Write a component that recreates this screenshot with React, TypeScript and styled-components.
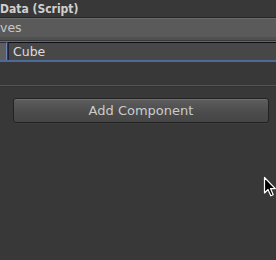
import React from "react";
import styled, { createGlobalStyle } from "styled-components";

const Global = createGlobalStyle`
  html, body { margin: 0; padding: 0; background: #383838; }
  body { font-family: "DejaVu Sans", "Liberation Sans", sans-serif; overflow: hidden; }
`;

const Panel = styled.div`
  position: relative;
  width: 276px;
  height: 260px;
  background: #383838;
  display: flex;
  flex-direction: column;
  overflow: hidden;
`;

const Title = styled.div`
  height: 17px;
  line-height: 18px;
  font-family: "DejaVu Sans Condensed", "DejaVu Sans", sans-serif;
  font-size: 12px;
  font-weight: bold;
  color: #d0d0d0;
  white-space: nowrap;
`;

const Band = styled.div`
  height: 20px;
  border-top: 1px solid #262626;
  box-shadow: inset 0 1px 0 #696969, inset 0 -3px 0 #505050;
  background: #5a5a5a;
  color: #c8c8c8;
  font-size: 12.5px;
  line-height: 20px;
  white-space: nowrap;
  padding-bottom: 2px;
`;

const FieldRow = styled.div`
  margin-top: 1px;
  height: 18px;
  display: flex;
  border-top: 1px solid #4f6b9c;
  border-bottom: 2px solid #4e6a98;
`;

const Stub = styled.div`
  width: 6px;
  background: #5e5e5e;
  border-right: 1px solid #6d86b3;
  border-top: 1px solid #2a2a3a;
`;

const Field = styled.div`
  flex: 1;
  margin-left: 1px;
  background: #474747;
  border-top: 1px solid #0d0d18;
  border-left: 1px solid #20202e;
  color: #dcdcdc;
  font-size: 12.5px;
  line-height: 17px;
  padding-left: 4px;
`;

const Separator = styled.div`
  margin-top: 23px;
  height: 1px;
  background: #545454;
  border-bottom: 1px solid #333;
`;

const ButtonWrap = styled.div`
  margin-top: 11px;
  padding-left: 13px;
`;

const AddButton = styled.div`
  box-sizing: border-box;
  width: 256px;
  height: 25px;
  border-radius: 3px;
  border: 1px solid #222222;
  background: linear-gradient(#5d5d5d, #4b4b4b 60%, #464646);
  box-shadow: inset 0 1px 0 #6e6e6e, 0 1px 0 #3e3e3e;
  color: #cbcbcb;
  font-size: 13px;
  line-height: 23px;
  text-align: center;
`;

const Cursor = styled.svg`
  position: absolute;
  left: 263px;
  top: 176px;
`;

export default function App() {
  return (
    <>
      <Global />
      <Panel>
        <Title>Data (Script)</Title>
        <Band>ves</Band>
        <FieldRow>
          <Stub />
          <Field>Cube</Field>
        </FieldRow>
        <Separator />
        <ButtonWrap>
          <AddButton>Add Component</AddButton>
        </ButtonWrap>
        <Cursor width="14" height="22" viewBox="0 0 14 22">
          <path
            d="M1.5 1.5 L1.5 17 L5 13.5 L7.8 19.8 L10.2 18.8 L7.5 12.6 L12.3 12.6 Z"
            fill="#000"
            stroke="#fff"
            strokeWidth="1.2"
            strokeLinejoin="round"
          />
        </Cursor>
      </Panel>
    </>
  );
}
